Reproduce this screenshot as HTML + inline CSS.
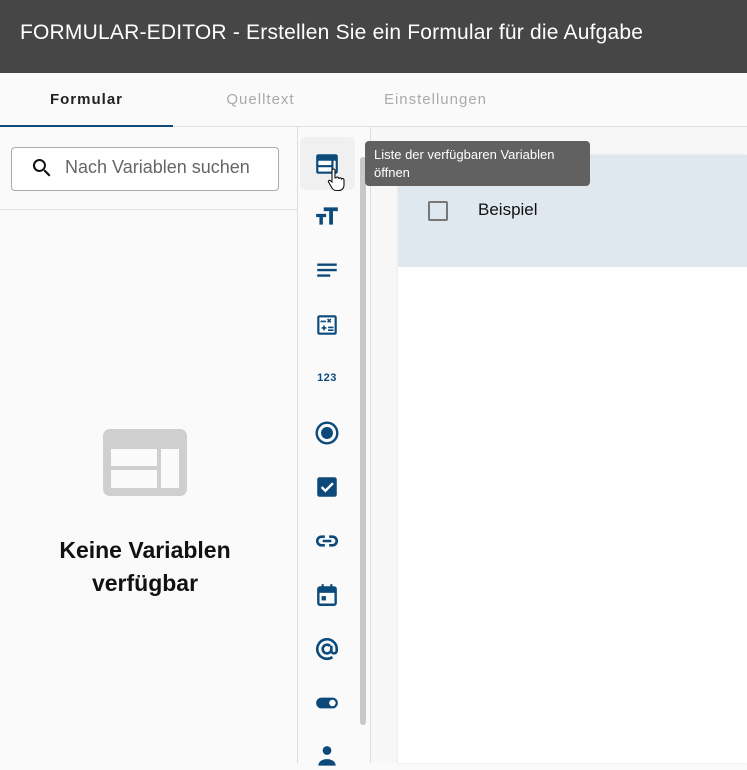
<!DOCTYPE html>
<html><head><meta charset="utf-8"><style>
*{margin:0;padding:0;box-sizing:border-box}
body{width:747px;height:763px;overflow:hidden;font-family:"Liberation Sans",sans-serif;background:#fafafa;position:relative}
.a{position:absolute}
.hdr{left:0;top:0;width:747px;height:73px;background:#464646;color:#fff;font-size:21px;line-height:66px;padding-left:20px;letter-spacing:.2px}
.tabs{left:0;top:73px;width:747px;height:54px;background:#fafafa;border-bottom:1px solid #e0e0e0}
.tab{position:absolute;top:0;height:54px;line-height:53px;font-size:15px;letter-spacing:1px;text-align:center}
.ic{position:absolute;left:314px;width:26px;height:26px}
</style></head><body>
<div class="a hdr">FORMULAR-EDITOR - Erstellen Sie ein Formular für die Aufgabe</div>
<div class="a tabs">
<div class="tab" style="left:0;width:170px;color:#222;font-weight:bold;border-bottom:2px solid #0b4a7a;width:173px">Formular</div>
<div class="tab" style="left:173px;width:175px;color:#aaa">Quelltext</div>
<div class="tab" style="left:348px;width:175px;color:#aaa">Einstellungen</div>
</div>
<div class="a" style="left:11px;top:147px;width:268px;height:44px;border:1px solid #aaa;border-radius:4px;background:#fff"></div>
<svg class="a" style="left:30px;top:156px" width="24" height="24" viewBox="0 0 24 24"><path d="M15.5 14h-.8l-.3-.3A6.5 6.5 0 1 0 9.5 16a6.5 6.5 0 0 0 4.2-1.6l.3.3v.8l5 5 1.5-1.5-5-5zm-6 0a4.5 4.5 0 1 1 0-9 4.5 4.5 0 0 1 0 9z" fill="#111"/></svg>
<div class="a" style="left:65px;top:157px;font-size:18px;color:#666">Nach Variablen suchen</div>
<div class="a" style="left:0;top:209px;width:297px;height:1px;background:#e0e0e0"></div>
<svg class="a" style="left:103px;top:429px" width="84" height="67" viewBox="0 0 84 67"><rect width="84" height="67" rx="7" fill="#cfcfcf"/><rect x="8" y="20" width="46" height="17" fill="#fafafa"/><rect x="8" y="41" width="46" height="18" fill="#fafafa"/><rect x="58" y="20" width="18" height="39" fill="#fafafa"/></svg>
<div class="a" style="left:0;top:534px;width:290px;text-align:center;font-size:23px;font-weight:bold;color:#111;line-height:33px">Keine Variablen<br>verfügbar</div>
<div class="a" style="left:297px;top:127px;width:1px;height:636px;background:#ddd"></div>
<div class="a" style="left:370px;top:127px;width:1px;height:636px;background:#ddd"></div>
<div class="a" style="left:360px;top:157px;width:6px;height:568px;border-radius:3px;background:#c8c8c8"></div>
<div class="a" style="left:300px;top:137px;width:55px;height:53px;border-radius:6px;background:#f0f0f0"></div>
<svg class="ic" style="top:151px" viewBox="0 0 24 24"><rect x="2" y="3" width="20" height="18" rx="2" fill="#0b4a7a"/><rect x="4" y="9" width="12" height="4" fill="#fff"/><rect x="4" y="15" width="12" height="4" fill="#fff"/><rect x="18" y="9" width="2" height="10" fill="#fff"/></svg>
<svg class="a" style="left:327px;top:168px" width="18" height="24" viewBox="0 0 18 24"><path d="M5 2.5a1.5 1.5 0 0 1 3 0V10l1-.2a1.4 1.4 0 0 1 2.6.4l.4.2a1.4 1.4 0 0 1 2.5.6 1.4 1.4 0 0 1 2.5.9V17c0 3-2 5.5-5 5.5H9c-2 0-3-1-4-2.5L1.5 14c-.6-1 .6-2.2 1.6-1.5L5 14z" fill="#fff" stroke="#111" stroke-width="1.1"/></svg>
<svg class="ic" style="top:203px" viewBox="0 0 24 24"><path d="M9 4v3.5h5V20h3.5V7.5H22V4zM2 10v3h3v7h3.2v-7h3v-3z" fill="#0b4a7a"/></svg>
<svg class="ic" style="top:257px" viewBox="0 0 24 24"><path d="M3 6h18v2.2H3zm0 5h18v2.2H3zm0 5h12v2.2H3z" fill="#0b4a7a"/></svg>
<svg class="ic" style="top:312px" viewBox="0 0 24 24"><rect x="3" y="3" width="18" height="18" rx="2" fill="#0b4a7a"/><rect x="5" y="5" width="14" height="14" fill="#fff"/><path d="M6 8h5v1.5H6zm7-2l1 1 1-1 1 1-1 1 1 1-1 1-1-1-1 1-1-1 1-1-1-1zm-6 8h1.5v-1.5H10V14h1.5v1.5H10V17H8.5v-1.5H7zm6-.5h5V15h-5zm0 2.5h5v1.5h-5z" fill="#0b4a7a"/></svg>
<div class="a" style="left:312px;top:372px;width:30px;text-align:center;font-size:11px;font-weight:bold;color:#0b4a7a;letter-spacing:.5px">123</div>
<svg class="ic" style="top:420px" viewBox="0 0 24 24"><circle cx="12" cy="12" r="9.5" fill="none" stroke="#0b4a7a" stroke-width="2.2"/><circle cx="12" cy="12" r="5.5" fill="#0b4a7a"/></svg>
<svg class="ic" style="top:474px" viewBox="0 0 24 24"><rect x="3" y="3" width="18" height="18" rx="2" fill="#0b4a7a"/><path d="M7 12l3.5 3.5L17.5 8.5" fill="none" stroke="#fff" stroke-width="2.2"/></svg>
<svg class="ic" style="top:528px" viewBox="0 0 24 24"><path d="M10 8H7a4 4 0 0 0 0 8h3M14 8h3a4 4 0 0 1 0 8h-3M8 12h8" fill="none" stroke="#0b4a7a" stroke-width="2.4"/></svg>
<svg class="ic" style="top:582px" viewBox="0 0 24 24"><rect x="4" y="5" width="16" height="16" rx="1.5" fill="none" stroke="#0b4a7a" stroke-width="2.2"/><rect x="4" y="5" width="16" height="5" fill="#0b4a7a"/><rect x="7" y="2" width="2" height="4" fill="#0b4a7a"/><rect x="15" y="2" width="2" height="4" fill="#0b4a7a"/><rect x="7" y="13" width="4" height="4" fill="#0b4a7a"/></svg>
<svg class="ic" style="top:636px" viewBox="0 0 24 24"><path d="M16 12a4 4 0 1 1-1.2-2.8M16 9v4.5a2.5 2.5 0 0 0 5 0V12a9 9 0 1 0-4 7.5" fill="none" stroke="#0b4a7a" stroke-width="2.4"/></svg>
<svg class="ic" style="top:690px" viewBox="0 0 24 24"><rect x="2" y="7" width="20" height="10" rx="5" fill="#0b4a7a"/><circle cx="17" cy="12" r="3" fill="#fff"/></svg>
<svg class="ic" style="top:744px" viewBox="0 0 24 24"><circle cx="12" cy="6" r="4" fill="#0b4a7a"/><path d="M4 20c0-4 4-6 8-6s8 2 8 6z" fill="#0b4a7a"/></svg>
<div class="a" style="left:371px;top:127px;width:376px;height:636px;background:#f7f7f7"></div>
<div class="a" style="left:398px;top:155px;width:349px;height:608px;background:#fff;box-shadow:0 0 2px rgba(0,0,0,.12)"></div>
<div class="a" style="left:398px;top:155px;width:349px;height:112px;background:#dfe7ef"></div>
<div class="a" style="left:428px;top:201px;width:20px;height:20px;border:2px solid #777;border-radius:2px"></div>
<div class="a" style="left:478px;top:200px;font-size:17px;color:#111">Beispiel</div>
<div class="a" style="left:365px;top:141px;width:225px;height:45px;background:#616161;border-radius:4px;color:#fff;font-size:13px;line-height:18px;padding:5px 9px">Liste der verfügbaren Variablen öffnen</div>
</body></html>
